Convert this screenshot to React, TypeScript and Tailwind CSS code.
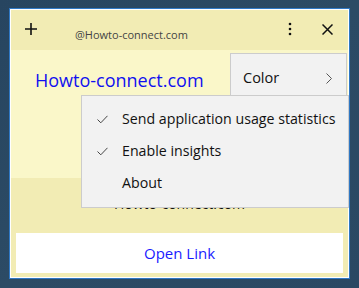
import React from "react";

const font = { fontFamily: '"Open Sans", "Noto Sans", sans-serif' };

function Check() {
  return (
    <svg width="11" height="9" viewBox="0 0 11 9" className="block">
      <path d="M0.5 4.5 L3.8 7.8 L10.5 0.8" fill="none" stroke="#444" strokeWidth="1" />
    </svg>
  );
}

export default function App() {
  return (
    <div
      className="w-[359px] h-[288px] overflow-hidden bg-gradient-to-br from-[#274560] via-[#2c4b65] to-[#2a4863] pl-[9px] pt-[8px]"
      style={font}
    >
      <div className="relative w-[341px] h-[271px] border border-[#2f78c4]">
        <div className="flex flex-col w-full h-full border border-white">
          {/* title bar */}
          <div className="h-[40px] bg-[#f2ecb4] flex items-center shrink-0">
            <svg width="12" height="12" viewBox="0 0 12 12" className="ml-[14px] mt-[-2px]">
              <path d="M6 0 V12 M0 6 H12" stroke="#111" strokeWidth="1.6" />
            </svg>
            <span className="ml-[38px] mt-[11px] text-[11px] text-[#444]">@Howto-connect.com</span>
            <svg width="4" height="14" viewBox="0 0 4 14" className="ml-auto mt-[-2px]">
              <circle cx="2" cy="2" r="1.3" fill="#111" />
              <circle cx="2" cy="7" r="1.3" fill="#111" />
              <circle cx="2" cy="12" r="1.3" fill="#111" />
            </svg>
            <svg width="11" height="11" viewBox="0 0 11 11" className="ml-[30px] mr-[15px] mt-[-2px]">
              <path d="M0.5 0.5 L10.5 10.5 M10.5 0.5 L0.5 10.5" stroke="#111" strokeWidth="1.5" />
            </svg>
          </div>
          {/* content */}
          <div className="h-[128px] bg-[#faf7c9] shrink-0 pl-[24px] pt-[16px]">
            <span className="text-[18px] leading-[28px] text-[#1010f0]">Howto-connect.com</span>
          </div>
          <div className="flex-1 bg-[#f2ecb4] flex flex-col items-center pt-[16px] px-[5px]">
            <span className="text-[14px] leading-[20px] text-[#111]">Howto-connect.com</span>
            <div className="mt-[19px] w-full h-[40px] bg-white flex items-center justify-center">
              <span className="text-[15px] text-[#1a1aff]">Open Link</span>
            </div>
          </div>
        </div>

        {/* Color submenu */}
        <div className="absolute left-[220px] top-[44px] w-[117px] h-[60px] bg-[#f2f2f2] border border-[#cccccc] flex items-start pt-[14px] pl-[12px] pr-[14px]">
          <span className="text-[14.5px] leading-[20px] text-[#111]">Color</span>
          <svg width="6" height="11" viewBox="0 0 6 11" className="ml-auto mt-[5px]">
            <path d="M0.5 0.5 L5.5 5.5 L0.5 10.5" fill="none" stroke="#555" strokeWidth="1" />
          </svg>
        </div>

        {/* context menu */}
        <div className="absolute left-[71px] top-[86px] w-[268px] h-[113px] bg-[#f2f2f2] border border-[#cccccc] pt-[7px]">
          <div className="h-[32px] flex items-center">
            <div className="w-[40px] pl-[15px]"><Check /></div>
            <span className="text-[14.2px] text-[#111]">Send application usage statistics</span>
          </div>
          <div className="h-[32px] flex items-center">
            <div className="w-[40px] pl-[15px]"><Check /></div>
            <span className="text-[14.2px] text-[#111]">Enable insights</span>
          </div>
          <div className="h-[32px] flex items-center">
            <div className="w-[40px]" />
            <span className="text-[14.2px] text-[#111]">About</span>
          </div>
        </div>
      </div>
    </div>
  );
}
